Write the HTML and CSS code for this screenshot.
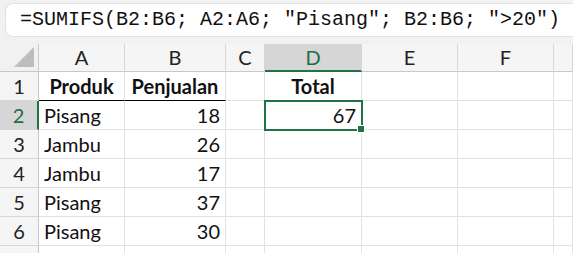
FILE: index.html
```html
<!DOCTYPE html>
<html lang="id">
<head>
    <meta charset="UTF-8">
    <title>SUMIFS</title>
    <link rel="stylesheet" href="styles.css">
</head>
<body>
    <div class="formula-area">
        <div class="formula-bar">=SUMIFS(B2:B6; A2:A6; "Pisang"; B2:B6; "&gt;20")</div>
    </div>

    <div class="sheet">
        <div class="corner"><span class="tri"></span></div>
        <div class="col-head">A</div>
        <div class="col-head">B</div>
        <div class="col-head">C</div>
        <div class="col-head active">D</div>
        <div class="col-head">E</div>
        <div class="col-head">F</div>
        <div class="col-head"></div>

        <div class="row-head">1</div>
        <div class="cell bold center title-line">Produk</div>
        <div class="cell bold center title-line">Penjualan</div>
        <div class="cell"></div>
        <div class="cell bold center">Total</div>
        <div class="cell"></div>
        <div class="cell"></div>
        <div class="cell"></div>

        <div class="row-head active">2</div>
        <div class="cell">Pisang</div>
        <div class="cell num">18</div>
        <div class="cell"></div>
        <div class="cell num selected">67</div>
        <div class="cell"></div>
        <div class="cell"></div>
        <div class="cell"></div>

        <div class="row-head">3</div>
        <div class="cell">Jambu</div>
        <div class="cell num">26</div>
        <div class="cell"></div>
        <div class="cell"></div>
        <div class="cell"></div>
        <div class="cell"></div>
        <div class="cell"></div>

        <div class="row-head">4</div>
        <div class="cell">Jambu</div>
        <div class="cell num">17</div>
        <div class="cell"></div>
        <div class="cell"></div>
        <div class="cell"></div>
        <div class="cell"></div>
        <div class="cell"></div>

        <div class="row-head">5</div>
        <div class="cell">Pisang</div>
        <div class="cell num">37</div>
        <div class="cell"></div>
        <div class="cell"></div>
        <div class="cell"></div>
        <div class="cell"></div>
        <div class="cell"></div>

        <div class="row-head">6</div>
        <div class="cell">Pisang</div>
        <div class="cell num">30</div>
        <div class="cell"></div>
        <div class="cell"></div>
        <div class="cell"></div>
        <div class="cell"></div>
        <div class="cell"></div>

        <div class="row-head"></div>
        <div class="cell"></div>
        <div class="cell"></div>
        <div class="cell"></div>
        <div class="cell"></div>
        <div class="cell"></div>
        <div class="cell"></div>
        <div class="cell"></div>
    </div>
</body>
</html>
```

FILE: styles.css
```css
body {
    margin: 0;
    overflow: hidden;
    background: #ffffff;
    font-family: Lato, "Liberation Sans", sans-serif;
    color: #111;
}
.formula-area {
    height: 44px;
    box-sizing: border-box;
    padding: 3px 0 0 5px;
    background: #f1f1f1;
}
.formula-bar {
    height: 34px;
    box-sizing: border-box;
    background: #ffffff;
    border: 1px solid #e2e2e2;
    border-right: none;
    border-radius: 8px 0 0 8px;
    padding-left: 14px;
    font-family: "Liberation Mono", monospace;
    font-size: 20px;
    line-height: 32px;
    color: #111;
    white-space: nowrap;
}
.sheet {
    display: grid;
    grid-template-columns: 39px 86px 101px 39px 97px 96px 96px 1fr;
    grid-template-rows: 28px repeat(7, 29px);
    font-size: 20px;
}
.corner {
    position: relative;
    background: #f1f1f1;
    border-right: 1px solid #c9c9c9;
    border-bottom: 1px solid #c9c9c9;
}
.tri {
    position: absolute;
    right: 4px;
    bottom: 4px;
    width: 0;
    height: 0;
    border-left: 20px solid transparent;
    border-bottom: 20px solid #bdbdbd;
}
.col-head {
    background: #f5f5f5;
    border-right: 1px solid #d6d6d6;
    border-bottom: 1px solid #c9c9c9;
    text-align: center;
    line-height: 27px;
    color: #222;
}
.col-head.active {
    background: #d6d6d6;
    color: #1e6e42;
    border-bottom: 2px solid #217346;
}
.row-head {
    background: #f5f5f5;
    border-right: 1px solid #c9c9c9;
    border-bottom: 1px solid #d6d6d6;
    text-align: center;
    line-height: 27px;
    padding-top: 1px;
    color: #222;
}
.row-head.active {
    background: #d6d6d6;
    color: #1e6e42;
    border-right: 2px solid #217346;
}
.cell {
    border-right: 1px solid #e1e1e1;
    border-bottom: 1px solid #e1e1e1;
    padding: 1px 5px 0 5px;
    line-height: 27px;
    white-space: nowrap;
    overflow: hidden;
}
.bold {
    font-weight: bold;
}
.center {
    text-align: center;
    padding-left: 0;
    padding-right: 0;
}
.num {
    text-align: right;
}
.title-line {
    border-bottom-color: #000;
}
.selected {
    position: relative;
    overflow: visible;
    outline: 2px solid #217346;
    outline-offset: -1px;
    z-index: 1;
}
.selected::after {
    content: "";
    position: absolute;
    right: -4px;
    bottom: -4px;
    width: 6px;
    height: 6px;
    background: #217346;
    border: 1px solid #fff;
}
```
